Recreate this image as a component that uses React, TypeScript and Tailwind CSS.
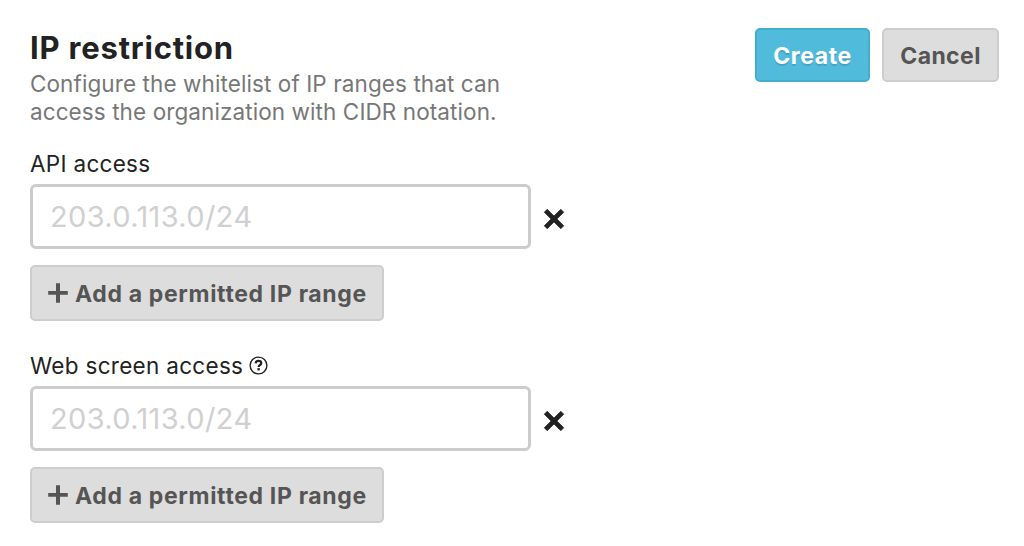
import React from 'react';

const PlusIcon = () => <svg className="size-5 shrink-0" viewBox="0 0 20 20" fill="currentColor" aria-hidden="true">
    <path d="M8 0.2h4v7.8h7.8v3.8H12v8H8v-8H0.2V8H8z" />
  </svg>;

const CloseIcon = () => <svg className="size-[22px]" viewBox="0 0 22 22" fill="currentColor" stroke="currentColor" strokeWidth="0.8" strokeLinejoin="round" aria-hidden="true">
    <path d="M4.2 1.3 11 8.1l6.8-6.8 2.9 2.9L13.9 11l6.8 6.8-2.9 2.9L11 13.9l-6.8 6.8-2.9-2.9L8.1 11 1.3 4.2z" />
  </svg>;

const HelpIcon = () => <svg className="-mt-px size-[19px]" viewBox="0 0 19 19" fill="none" stroke="currentColor" aria-hidden="true">
    <circle cx="9.5" cy="9.5" r="8.4" strokeWidth="1.4" />
    <path d="M6.6 7.4C6.7 5.8 7.9 4.9 9.5 4.9c1.6 0 2.8.9 2.8 2.3 0 1.8-2.7 1.8-2.7 3.8" strokeWidth="2.2" />
    <path d="M9.6 12.1v2.3" strokeWidth="2.4" />
  </svg>;

const IpRangeField = ({ label, help }: { label: string; help?: boolean }) => <section>
    <div className="flex h-7 items-center gap-1.5 text-[22.5px] leading-7 tracking-[0.3px] text-[#222]">
      <span>{label}</span>
      {help && <HelpIcon />}
    </div>
    <div className="mt-[6px] flex items-center gap-3">
      <input className="h-[65px] w-[501px] rounded-md border-3 border-[#ccc] bg-white px-[17px] text-[29px] tracking-[0.36px] text-[#222] outline-none placeholder:text-[#d0d0d0]" placeholder="203.0.113.0/24" aria-label={label} />
      <button type="button" aria-label="Remove" className="mt-1 text-[#222]">
        <CloseIcon />
      </button>
    </div>
    <button type="button" className="mt-4 flex h-14 w-[354px] items-center gap-[7px] rounded-[5px] border-2 border-[#cdcdcd] bg-[#ddd] pl-4 text-[23px] font-bold tracking-[0.66px] whitespace-nowrap text-[#555]">
      <PlusIcon />
      <span className="pt-0.5">Add a permitted IP range</span>
    </button>
  </section>;

export default function App() {
  return <main className="h-[546px] overflow-hidden bg-white pt-7 pr-[25px] pl-[30px] font-['Inter',sans-serif]">
      <header className="flex items-start justify-between">
        <div>
          <h1 className="text-[31px] leading-10 font-bold tracking-[0.8px] text-[#222]">IP restriction</h1>
          <p className="mt-[2px] text-[22.5px] leading-[28px] tracking-[0.09px] whitespace-nowrap text-[#777]">
            Configure the whitelist of IP ranges that can
            <br />
            access the organization with CIDR notation.
          </p>
        </div>
        <div className="flex gap-3">
          <button type="button" className="h-[54px] w-[115px] rounded-[5px] border-2 border-[#43adcd] bg-[#51bbdc] pt-0.5 text-[23px] font-bold tracking-[0.6px] text-white text-shadow-[0_2px_0_rgb(0_0_0/0.15)]">Create</button>
          <button type="button" className="h-[54px] w-[117px] rounded-[5px] border-2 border-[#cdcdcd] bg-[#ddd] pt-0.5 text-[23px] font-bold tracking-[0.4px] text-[#555]">Cancel</button>
        </div>
      </header>
      <div className="mt-6 flex flex-col gap-[31px]">
        <IpRangeField label="API access" />
        <IpRangeField label="Web screen access" help />
      </div>
    </main>;
}
